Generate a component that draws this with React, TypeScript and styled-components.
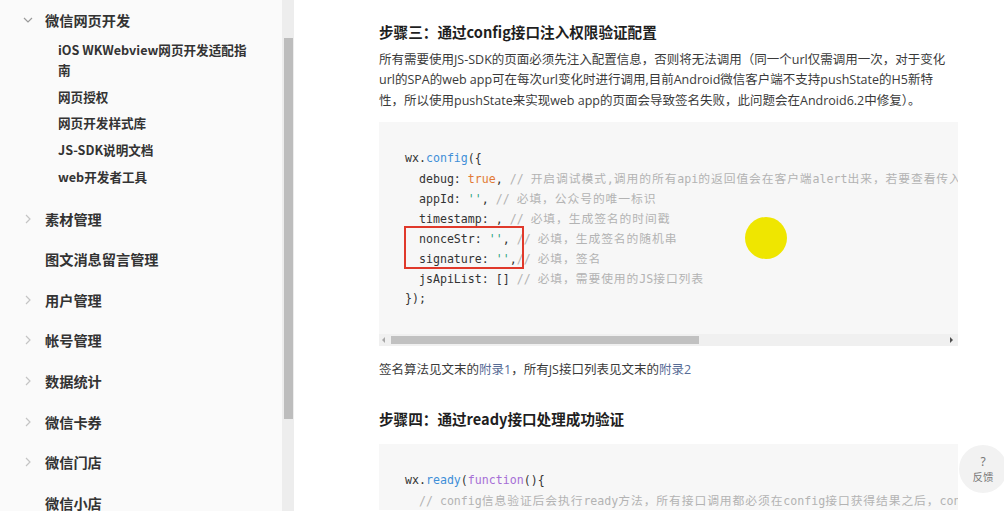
import React from "react";
import styled, { createGlobalStyle } from "styled-components";

const GlobalStyle = createGlobalStyle`
  html, body {
    margin: 0;
    padding: 0;
    background: #ffffff;
  }
  body {
    font-family: "Noto Sans CJK SC", "Noto Sans", sans-serif;
    overflow: hidden;
  }
`;

type NavItem = {
  label: string;
  arrow?: "down" | "right";
  children?: string[];
};

const navItems: NavItem[] = [
  {
    label: "微信网页开发",
    arrow: "down",
    children: [
      "iOS WKWebview网页开发适配指南",
      "网页授权",
      "网页开发样式库",
      "JS-SDK说明文档",
      "web开发者工具",
    ],
  },
  { label: "素材管理", arrow: "right" },
  { label: "图文消息留言管理" },
  { label: "用户管理", arrow: "right" },
  { label: "帐号管理", arrow: "right" },
  { label: "数据统计", arrow: "right" },
  { label: "微信卡券", arrow: "right" },
  { label: "微信门店", arrow: "right" },
  { label: "微信小店" },
];

const introLines = [
  "所有需要使用JS-SDK的页面必须先注入配置信息，否则将无法调用（同一个url仅需调用一次，对于变化",
  "url的SPA的web app可在每次url变化时进行调用,目前Android微信客户端不支持pushState的H5新特",
  "性，所以使用pushState来实现web app的页面会导致签名失败，此问题会在Android6.2中修复）。",
];

const renderComment = (text: string) =>
  text
    .split(/([\u3000-\u9fff\uff00-\uffef]+)/)
    .map((part, i) =>
      /[\u3000-\u9fff\uff00-\uffef]/.test(part) ? (
        <Han key={i}>{part}</Han>
      ) : (
        <React.Fragment key={i}>{part}</React.Fragment>
      )
    );

const Chevron = ({ dir }: { dir: "down" | "right" }) =>
  dir === "down" ? (
    <svg width="10" height="6" viewBox="0 0 10 6">
      <polyline
        points="1,1 5,5 9,1"
        fill="none"
        stroke="#9a9a9a"
        strokeWidth="1.2"
      />
    </svg>
  ) : (
    <svg width="6" height="10" viewBox="0 0 6 10">
      <polyline
        points="1,1 5,5 1,9"
        fill="none"
        stroke="#c4c4c4"
        strokeWidth="1.2"
      />
    </svg>
  );

export default function App() {
  return (
    <Page>
      <GlobalStyle />
      <Sidebar>
        <Nav>
          {navItems.map((item) => (
            <NavGroup key={item.label}>
              <NavRow>
                <ArrowBox>{item.arrow && <Chevron dir={item.arrow} />}</ArrowBox>
                <NavLabel>{item.label}</NavLabel>
              </NavRow>
              {item.children && (
                <SubList>
                  {item.children.map((c) => (
                    <SubItem key={c}>{c}</SubItem>
                  ))}
                </SubList>
              )}
            </NavGroup>
          ))}
        </Nav>
        <ScrollTrack>
          <ScrollThumb />
        </ScrollTrack>
      </Sidebar>

      <Main>
        <Content>
          <Heading>步骤三：通过config接口注入权限验证配置</Heading>
          <Para>
            {introLines.map((l, i) => (
              <React.Fragment key={i}>
                {l}
                {i < introLines.length - 1 && <br />}
              </React.Fragment>
            ))}
          </Para>

          <CodeBlock>
            <Pre>
              <Line>
                wx.<Fn>config</Fn>
                {"({"}
              </Line>
              <Line>
                {"  debug: "}
                <Bool>true</Bool>
                {", "}
                <Comment>
                  {renderComment(
                    "// 开启调试模式,调用的所有api的返回值会在客户端alert出来，若要查看传入的参数，可以在pc端打开，参数信息会通过log打出，仅在pc端时才会打印。"
                  )}
                </Comment>
              </Line>
              <Line>
                {"  appId: "}
                <Str>''</Str>
                {", "}
                <Comment>{renderComment("// 必填，公众号的唯一标识")}</Comment>
              </Line>
              <Line>
                {"  timestamp: , "}
                <Comment>{renderComment("// 必填，生成签名的时间戳")}</Comment>
              </Line>
              <Line>
                {"  nonceStr: "}
                <Str>''</Str>
                {", "}
                <Comment>{renderComment("// 必填，生成签名的随机串")}</Comment>
              </Line>
              <Line>
                {"  signature: "}
                <Str>''</Str>
                {","}
                <Comment>{renderComment("// 必填，签名")}</Comment>
              </Line>
              <Line>
                {"  jsApiList: [] "}
                <Comment>{renderComment("// 必填，需要使用的JS接口列表")}</Comment>
              </Line>
              <Line>{"});"}</Line>
            </Pre>
            <HScroll>
              <ScrollArrow $side="left" />
              <HTrack>
                <HThumb />
              </HTrack>
              <ScrollArrow $side="right" />
            </HScroll>
            <RedMark />
            <CursorDot />
          </CodeBlock>

          <Para $gap={14}>
            签名算法见文末的<Link>附录1</Link>，所有JS接口列表见文末的<Link>附录2</Link>
          </Para>

          <Heading $top={28}>步骤四：通过ready接口处理成功验证</Heading>

          <CodeBlock $gap={14}>
            <Pre>
              <Line>
                wx.<Fn>ready</Fn>
                {"("}
                <Kw>function</Kw>
                {"(){"}
              </Line>
              <Line>
                {"  "}
                <Comment>
                  {renderComment(
                    "// config信息验证后会执行ready方法，所有接口调用都必须在config接口获得结果之后，config是一个客户端的异步操作"
                  )}
                </Comment>
              </Line>
            </Pre>
          </CodeBlock>
        </Content>
      </Main>

      <Feedback>
        <Mark>?</Mark>
        <FeedbackLabel>反馈</FeedbackLabel>
      </Feedback>
    </Page>
  );
}

const Page = styled.div`
  display: flex;
  width: 1004px;
  height: 511px;
  overflow: hidden;
  position: relative;
`;

const Sidebar = styled.aside`
  display: flex;
  flex-shrink: 0;
  width: 294px;
  height: 100%;
  background: #fafafa;
`;

const Nav = styled.nav`
  width: 282px;
  color: #333333;
`;

const NavGroup = styled.div``;

const NavRow = styled.div`
  display: flex;
  align-items: center;
  height: 40.6px;
  padding-left: 22px;
`;

const ArrowBox = styled.span`
  display: flex;
  align-items: center;
  justify-content: center;
  width: 12px;
  margin-right: 11px;
`;

const NavLabel = styled.span`
  font-size: 14.2px;
  font-weight: 700;
  line-height: 20px;
`;

const SubList = styled.div`
  display: flex;
  flex-direction: column;
  gap: 6.7px;
  padding-left: 58px;
  margin-top: -0.6px;
  margin-bottom: 11.5px;
`;

const SubItem = styled.div`
  max-width: 198px;
  font-size: 12.6px;
  font-weight: 700;
  line-height: 20px;
  color: #333333;
`;

const ScrollTrack = styled.div`
  width: 12px;
  height: 100%;
  background: #ededed;
  display: flex;
  justify-content: center;
`;

const ScrollThumb = styled.div`
  width: 9px;
  height: 381px;
  margin-top: 38px;
  background: #bdbdbd;
`;

const Main = styled.main`
  flex: 1;
  background: #ffffff;
  padding-left: 85px;
`;

const Content = styled.div`
  width: 580px;
  padding-top: 21px;
`;

const Heading = styled.h3<{ $top?: number }>`
  margin: ${(p) => p.$top ?? 0}px 0 0;
  font-size: 14.6px;
  font-weight: 700;
  line-height: 22px;
  color: #1f1f1f;
`;

const Para = styled.p<{ $gap?: number }>`
  margin: ${(p) => p.$gap ?? 6.5}px 0 0;
  font-family: "Open Sans", "Noto Sans CJK SC", sans-serif;
  font-size: 12.5px;
  line-height: 20.5px;
  color: #3a3a3a;
  white-space: nowrap;
`;

const Link = styled.span`
  color: #576b95;
`;

const CodeBlock = styled.div<{ $gap?: number }>`
  position: relative;
  margin-top: ${(p) => p.$gap ?? 10.5}px;
  width: 579px;
  background: #f7f7f7;
`;

const Pre = styled.pre`
  margin: 0;
  padding: 26px 0 0 26px;
  overflow: hidden;
  white-space: pre;
  font-family: "DejaVu Sans Mono", "Noto Sans CJK SC", monospace;
  font-size: 11.6px;
  line-height: 20px;
  color: #333333;
`;

const Line = styled.div`
  height: 20px;
`;

const Fn = styled.span`
  color: #3f8fd8;
`;

const Kw = styled.span`
  color: #a66ed6;
`;

const Bool = styled.span`
  color: #e27a35;
`;

const Str = styled.span`
  color: #2fa57f;
`;

const Comment = styled.span`
  color: #b3b3b3;
`;

const Han = styled.span`
  font-family: "Noto Sans CJK SC", sans-serif;
  font-size: 11.8px;
  letter-spacing: 0.9px;
`;

const HScroll = styled.div`
  display: flex;
  align-items: center;
  height: 12px;
  margin-top: 26px;
  background: #f0f0f0;
`;

const ScrollArrow = styled.span<{ $side: "left" | "right" }>`
  width: 0;
  height: 0;
  margin: 0 ${(p) => (p.$side === "left" ? "6px 0 3px" : "5px 0 6px")};
  border-top: 3px solid transparent;
  border-bottom: 3px solid transparent;
  ${(p) =>
    p.$side === "left"
      ? "border-right: 3px solid #a8a8a8;"
      : "border-left: 3px solid #505050;"}
`;

const HTrack = styled.div`
  flex: 1;
  height: 8px;
`;

const HThumb = styled.div`
  width: 308px;
  height: 8px;
  background: #c1c1c1;
`;

const RedMark = styled.div`
  position: absolute;
  left: 25px;
  top: 104px;
  width: 116px;
  height: 39px;
  border: 2px solid #e0392b;
`;

const CursorDot = styled.div`
  position: absolute;
  left: 366px;
  top: 95px;
  width: 42px;
  height: 42px;
  border-radius: 50%;
  background: #efe600;
`;

const Feedback = styled.div`
  position: absolute;
  left: 959px;
  top: 445px;
  width: 48px;
  height: 48px;
  border-radius: 50%;
  background: #f2f2f2;
  display: flex;
  flex-direction: column;
  align-items: center;
  justify-content: center;
  gap: 2px;
  color: #777777;
`;

const Mark = styled.span`
  font-family: "Noto Sans", sans-serif;
  font-size: 12px;
  line-height: 13px;
`;

const FeedbackLabel = styled.span`
  font-size: 10.5px;
  line-height: 13px;
`;
